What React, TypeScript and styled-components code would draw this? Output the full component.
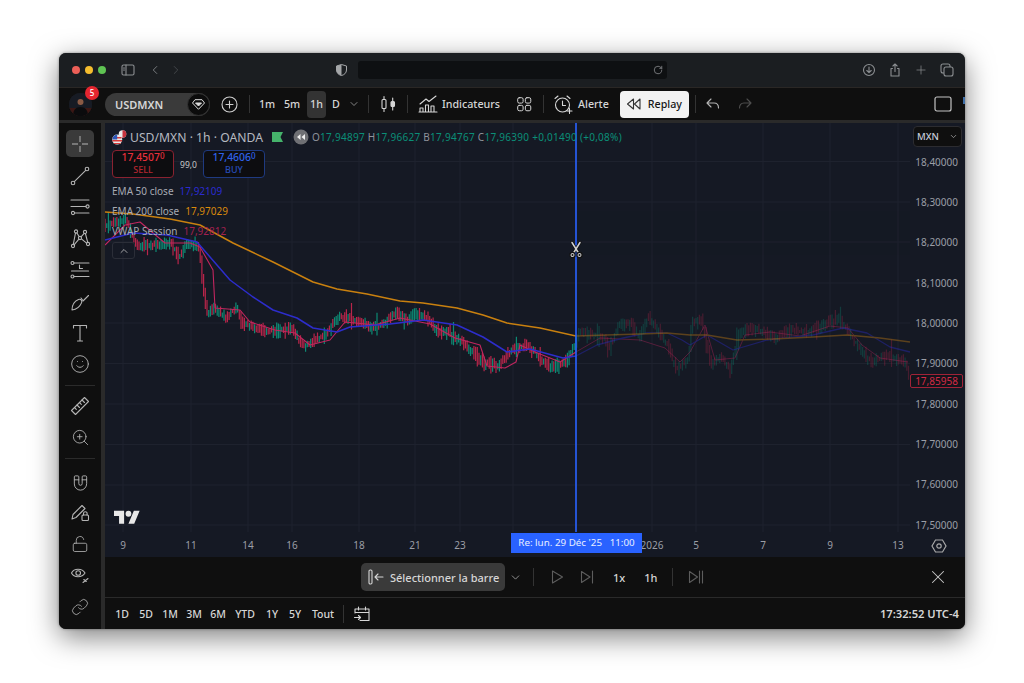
import React from "react";
import styled, { createGlobalStyle } from "styled-components";
import { ChevronDown, ChevronLeft, ChevronRight, ChevronUp, Link, LockOpen, Magnet, Plus, RotateCw, Smile, X, ZoomIn } from "lucide-react";

const COLORS = {
  title: "#1b1e21",
  bar: "#0f0f0f",
  gap: "#2a2a2a",
  chart: "#151924",
  grid: "#1e222e",
  text: "#d6d6d6",
  dim: "#9a9ca3",
  muted: "#5d5d5d",
  teal: "#0b8f78",
  red: "#c9233f",
  blue: "#2962ff",
};

const FONT = `"Noto Sans", "Liberation Sans", sans-serif`;

const GlobalStyle = createGlobalStyle`
  html, body { margin: 0; padding: 0; background: #fff; }
  body { font-family: ${FONT}; }
`;

const Page = styled.div`
  width: 1024px;
  height: 683px;
  padding: 53px 59px 54px;
  box-sizing: border-box;
  overflow: hidden;
`;

const Window = styled.div`
  width: 906px;
  height: 576px;
  border-radius: 7px;
  overflow: hidden;
  display: flex;
  flex-direction: column;
  background: ${COLORS.gap};
  box-shadow: 0 8px 28px rgba(0, 0, 0, 0.5), 0 0 3px rgba(0, 0, 0, 0.4);
`;

/* title bar */
const TitleBar = styled.div`
  height: 34px;
  flex: none;
  display: flex;
  align-items: center;
  padding-left: 13px;
  background: ${COLORS.title};
  border-bottom: 1px solid #2a2725;
  color: #8c8f92;
`;

const Light = styled.span<{ $c: string }>`
  width: 8px;
  height: 8px;
  margin-right: 5px;
  border-radius: 50%;
  background: ${({ $c }) => $c};
`;

const AddressBar = styled.div`
  width: 309px;
  height: 18px;
  margin-left: 11px;
  padding-right: 4px;
  box-sizing: border-box;
  border-radius: 3px;
  background: #0e1012;
  display: flex;
  align-items: center;
  justify-content: flex-end;
`;

const TitleIcons = styled.div`
  margin-left: auto;
  margin-right: 11px;
  display: flex;
  align-items: center;
  gap: 12px;
`;

const Nudge = styled.span<{ $l: number }>`
  display: flex;
  flex: none;
  margin-left: ${({ $l }) => $l}px;
`;

/* top toolbar */
const Toolbar = styled.div`
  height: 32px;
  flex: none;
  display: flex;
  align-items: center;
  padding-left: 10px;
  background: ${COLORS.bar};
  color: ${COLORS.text};
  font-size: 10.7px;
  font-weight: 500;
`;

const Avatar = styled.div`
  position: relative;
  width: 23px;
  height: 23px;
  flex: none;
  border-radius: 50%;
  background: #1d1a1c;
`;

const Badge = styled.span`
  position: absolute;
  top: -7px;
  right: -7px;
  width: 14px;
  height: 14px;
  border-radius: 50%;
  background: #e5252f;
  color: #fff;
  font-size: 8px;
  line-height: 14px;
  text-align: center;
`;

const SymbolPill = styled.div`
  width: 105px;
  height: 23px;
  margin-left: 13px;
  padding-left: 10px;
  box-sizing: border-box;
  flex: none;
  display: flex;
  align-items: center;
  justify-content: space-between;
  border-radius: 12px;
  background: #3a3a3a;
  font-weight: 600;
  font-size: 11px;
`;

const DiamondWrap = styled.span`
  width: 23px;
  height: 23px;
  border-radius: 50%;
  background: #0c0c0c;
  border: 1px solid #333;
  box-sizing: border-box;
  display: flex;
  align-items: center;
  justify-content: center;
`;

const Divider = styled.span<{ $l: number; $h?: number }>`
  width: 1px;
  height: ${({ $h }) => $h ?? 18}px;
  flex: none;
  margin-left: ${({ $l }) => $l}px;
  background: #333;
`;

const Interval = styled.span<{ $on?: boolean; $w: number; $l?: number }>`
  width: ${({ $w }) => $w}px;
  height: 27px;
  flex: none;
  margin-left: ${({ $l }) => $l ?? 0}px;
  border-radius: 4px;
  line-height: 27px;
  text-align: center;
  background: ${({ $on }) => ($on ? "#333" : "transparent")};
`;

const Label = styled.span<{ $l: number }>`
  margin-left: ${({ $l }) => $l}px;
  flex: none;
`;

const ReplayButton = styled.div`
  width: 69px;
  height: 27px;
  margin-left: 11px;
  padding-left: 6px;
  box-sizing: border-box;
  flex: none;
  display: flex;
  align-items: center;
  gap: 6px;
  border-radius: 4px;
  background: #f2f2f2;
  color: #161616;
`;

const Sliver = styled.span`
  width: 2px;
  height: 7px;
  margin: 0 0 8px auto;
  flex: none;
  background: #3f6fa8;
`;

/* body */
const Body = styled.div`
  flex: 1;
  min-height: 0;
  margin-top: 3px;
  display: flex;
  gap: 4px;
`;

const Sidebar = styled.div`
  width: 42px;
  flex: none;
  padding-top: 7px;
  box-sizing: border-box;
  display: flex;
  flex-direction: column;
  align-items: center;
  background: ${COLORS.bar};
  color: #b4b4b4;
`;

const Tool = styled.div<{ $on?: boolean }>`
  width: 28px;
  height: ${({ $on }) => ($on ? 27 : 31.4)}px;
  flex: none;
  border-radius: 5px;
  display: flex;
  align-items: center;
  justify-content: center;
  background: ${({ $on }) => ($on ? "#3a3a3a" : "transparent")};
`;

const Gap = styled.span<{ $h: number }>`
  height: ${({ $h }) => $h}px;
  flex: none;
`;

const SideDivider = styled.span`
  width: 30px;
  height: 1px;
  flex: none;
  background: #2b2b2b;
`;

const Main = styled.div`
  flex: 1;
  min-width: 0;
  display: flex;
  flex-direction: column;
`;

/* chart */
const ChartPane = styled.div`
  height: 434px;
  flex: none;
  display: grid;
  grid-template-columns: 805px 55px;
  grid-template-rows: 409px 25px;
  background: ${COLORS.chart};
`;

const Plot = styled.div`
  position: relative;
  grid-column: 1;
  grid-row: 1;
`;

const ChartSvg = styled.svg`
  display: block;
`;

const Legend = styled.div`
  position: absolute;
  left: 7px;
  top: 5px;
  color: #a7aab3;
`;

const SymbolRow = styled.div`
  display: flex;
  align-items: center;
  height: 18px;
  font-size: 12.2px;
  color: #b6b9c0;
`;

const Ohlc = styled.span`
  margin-left: 3px;
  font-size: 10px;
  letter-spacing: 0.27px;
  color: #8f929b;
`;

const Val = styled.span<{ $c: string }>`
  color: ${({ $c }) => $c};
`;

const TradeRow = styled.div`
  display: flex;
  align-items: center;
  margin-top: 4px;
`;

const TradeBox = styled.div<{ $c: string; $t: string }>`
  width: 62px;
  height: 28px;
  box-sizing: border-box;
  border: 1px solid ${({ $c }) => $c};
  border-radius: 4px;
  background: #0d0d10;
  color: ${({ $t }) => $t};
  text-align: center;
  font-size: 10.4px;
  line-height: 13px;
  font-weight: 500;
`;

const TradeTitle = styled.div`
  font-size: 9px;
  line-height: 11px;
  opacity: 0.75;
`;

const Sup = styled.sup`
  font-size: 8px;
  line-height: 0;
  vertical-align: 2px;
`;

const Spread = styled.span`
  width: 29px;
  text-align: center;
  font-size: 8.5px;
  color: #c8c8c8;
`;

const Study = styled.div`
  height: 20px;
  display: flex;
  align-items: center;
  gap: 6px;
  font-size: 10px;
  &:first-of-type { margin-top: 3px; }
`;

const Studies = styled.div`
  margin-top: 3px;
`;

const Collapse = styled.div`
  width: 23px;
  height: 17px;
  margin-top: 1px;
  box-sizing: border-box;
  border: 1px solid #2b2e38;
  border-radius: 3px;
  display: flex;
  align-items: center;
  justify-content: center;
  color: #c4c4c4;
`;

const TvMark = styled.svg`
  position: absolute;
  left: 9px;
  top: 387px;
`;

const Scissors = styled.svg`
  position: absolute;
  left: 463px;
  top: 118px;
`;

const PriceAxis = styled.div`
  grid-column: 2;
  grid-row: 1 / 3;
  position: relative;
  display: flex;
  flex-direction: column;
  padding-top: 18.4px;
  box-sizing: border-box;
`;

const Price = styled.div`
  height: 40.35px;
  flex: none;
  display: flex;
  align-items: center;
  justify-content: flex-end;
  padding-right: 7px;
  font-size: 10px;
  color: #9b9ea6;
`;

const CurrencySelect = styled.div`
  position: absolute;
  left: 3px;
  top: 3px;
  width: 49px;
  height: 21px;
  padding: 0 3px;
  box-sizing: border-box;
  border: 1px solid #2c2c30;
  border-radius: 4px;
  background: #0f0f0f;
  display: flex;
  align-items: center;
  justify-content: space-between;
  font-size: 9.5px;
  font-weight: 500;
  color: #c6cbd8;
`;

const LastPrice = styled.div`
  position: absolute;
  left: 0;
  top: 251px;
  width: 53px;
  height: 14px;
  box-sizing: border-box;
  border: 1px solid #a02338;
  border-radius: 2px;
  background: #14141c;
  text-align: center;
  font-size: 10px;
  line-height: 12px;
  color: #d42a45;
`;

const SettingsIcon = styled.svg`
  position: absolute;
  left: 21px;
  top: 415px;
`;

const TimeAxis = styled.div`
  position: relative;
  grid-column: 1;
  grid-row: 2;
  display: flex;
  align-items: flex-start;
  padding-top: 6px;
  box-sizing: border-box;
  font-size: 10px;
  color: #9b9ea6;
`;

const Tick = styled.span<{ $gap: number }>`
  width: 0;
  flex: none;
  display: flex;
  justify-content: center;
  margin-left: ${({ $gap }) => $gap}px;
  line-height: 14px;
`;

const CursorTime = styled.div`
  position: absolute;
  left: 406px;
  top: 1px;
  width: 131px;
  height: 20px;
  background: ${COLORS.blue};
  color: #e8eeff;
  font-size: 9.8px;
  line-height: 20px;
  text-align: center;
  white-space: pre;
`;

/* replay bar */
const ReplayBar = styled.div`
  height: 40px;
  flex: none;
  display: flex;
  align-items: center;
  padding-left: 256px;
  background: ${COLORS.bar};
  color: ${COLORS.text};
  font-size: 11px;
  font-weight: 500;
`;

const SelectBar = styled.div`
  width: 144px;
  height: 28px;
  flex: none;
  padding-left: 6px;
  box-sizing: border-box;
  display: flex;
  align-items: center;
  gap: 5px;
  border-radius: 5px;
  background: #3a3a3a;
`;

const CloseSlot = styled.span`
  margin-left: auto;
  margin-right: 16px;
  display: flex;
`;

/* range bar */
const RangeBar = styled.div`
  height: 31px;
  flex: none;
  margin-top: 1px;
  display: flex;
  align-items: center;
  background: ${COLORS.bar};
  color: ${COLORS.text};
  font-size: 10.5px;
  font-weight: 500;
`;

const RangeItem = styled.span<{ $w: number }>`
  width: ${({ $w }) => $w}px;
  flex: none;
  text-align: center;
`;

const Clock = styled.span`
  margin-left: auto;
  margin-right: 6px;
  font-size: 11.2px;
  font-weight: 600;
`;

/* icons */
type IconProps = { size?: number; c?: string; children: React.ReactNode; box?: number };

const Icon = ({ size = 20, c = "currentColor", children, box = 20 }: IconProps) => (
  <svg width={size} height={size} viewBox={`0 0 ${box} ${box}`} fill="none" stroke={c} strokeWidth={1.1} strokeLinecap="round" strokeLinejoin="round">
    {children}
  </svg>
);

const Crosshair = () => (
  <Icon>
    <path d="M10 2v6M10 12v6M2 10h6M12 10h6" strokeLinecap="butt" strokeWidth="1.4" stroke="#8d8d8d" />
  </Icon>
);

const TrendLine = () => (
  <Icon>
    <circle cx="3" cy="17" r="1.8" />
    <circle cx="17" cy="3" r="1.8" />
    <path d="M4.3 15.7 15.7 4.3" />
  </Icon>
);

const FibLines = () => (
  <Icon>
    <path d="M1 3h18M1 9.5h15M5 16h14" />
    <circle cx="17.5" cy="9.5" r="1.6" />
    <circle cx="3" cy="16" r="1.6" />
  </Icon>
);

const Nodes = () => (
  <Icon>
    <circle cx="6" cy="2.5" r="1.6" />
    <circle cx="15" cy="3" r="1.6" />
    <circle cx="10" cy="9" r="1.6" />
    <circle cx="3" cy="17" r="1.6" />
    <circle cx="18" cy="15" r="1.6" />
    <path d="M7 4 9 7.600M14.200 4.400 11 7.800M11.400 9.800 16.600 14.200M8.900 10.200 4.100 15.800M5.500 4 3.300 15.400M15.400 4.500 17.700 13.400" />
  </Icon>
);

const FibL = () => (
  <Icon>
    <circle cx="2.5" cy="3" r="1.5" />
    <circle cx="2.5" cy="16.5" r="1.5" />
    <path d="M4 3h15M4 16.5h15M1.5 11h17" />
    <path d="M9.500 5v3.500h3" />
  </Icon>
);

const Brush = () => (
  <Icon>
    <path d="M2 18c0-5 3-9 6.500-10.500 2.500-.8 4 1.500 3 3.400C10 14.500 6 17.500 2 18Z" />
    <path d="M13 9 18.500 3.500M11 6l1.500 2" />
  </Icon>
);

const TextTool = () => (
  <Icon>
    <path d="M3.500 5V2.500h13V5M10 2.500V18M7.500 18h5" />
  </Icon>
);

const RulerTool = () => (
  <Icon>
    <path d="M1.500 14.500 14.500 1.500l4 4-13 13Z" />
    <path d="m4.500 11.500 1.800 1.800M7 9l2.500 2.500M9.500 6.500l1.800 1.800M12 4l2.500 2.500" />
  </Icon>
);

const PencilLock = () => (
  <Icon>
    <path d="M2 17l1-4.500L12 3.500l3 3-9 9Z" />
    <rect x="12" y="13" width="6.500" height="5.500" rx="1" />
    <path d="M13.500 13v-1.500a1.800 1.800 0 0 1 3.600 0V13" />
  </Icon>
);

const EyeTool = () => (
  <Icon>
    <path d="M1.500 8C4 3 12 3 15 8c-3 5-11 5-13.500 0Z" />
    <circle cx="8.200" cy="8" r="2.300" />
    <path d="M13 17.500l5-4M13.800 14.500l2.500 2" />
  </Icon>
);

const CandleIcon = () => (
  <Icon>
    <rect x="4" y="5.500" width="4" height="9" rx="1" />
    <path d="M6 2.500v3M6 14.500v3" />
    <rect x="13" y="7.500" width="3.500" height="5" rx="1" fill="currentColor" />
    <path d="M14.700 4v3.500M14.700 12.500V16" />
  </Icon>
);

const IndicatorIcon = () => (
  <Icon size={20}>
    <path d="M2 10 8 5l3 2.500L18 2" />
    <path d="M2 18v-4h3v4M7.500 18v-7h3v7M13 18v-6h3v6M1 18h18" />
  </Icon>
);

const GridIcon = () => (
  <Icon size={18}>
    <rect x="3" y="3" width="6" height="6" rx="1.700" />
    <rect x="11.500" y="3" width="6" height="6" rx="1.700" />
    <rect x="3" y="11.500" width="6" height="6" rx="1.700" />
    <rect x="11.500" y="11.500" width="6" height="6" rx="1.700" />
  </Icon>
);

const AlarmIcon = () => (
  <Icon size={20}>
    <circle cx="9.500" cy="11" r="7" />
    <path d="M9.500 7v4.500h3M2 4.500 5 2M17 4.500 14 2" />
    <path d="M16.500 14.500v5M14 17h5" stroke="#ddd" />
  </Icon>
);

const Rewind = ({ c = "currentColor", size = 16 }: { c?: string; size?: number }) => (
  <Icon size={size} c={c} box={16}>
    <path d="M7.500 3v10L1.500 8ZM14 3v10L8.500 8Z" />
  </Icon>
);

const SelectBarIcon = () => (
  <Icon size={18} box={18}>
    <rect x="2" y="2" width="3" height="14" rx="1.200" />
    <path d="M16 9H8M11 6 8 9l3 3" />
  </Icon>
);

const PlayIcon = () => (
  <Icon size={18} c={COLORS.muted} box={18}>
    <path d="M4.500 3 14.500 9 4.500 15Z" />
  </Icon>
);

const StepIcon = () => (
  <Icon size={18} c={COLORS.muted} box={18}>
    <path d="M3.500 3.500 12 9l-8.500 5.500ZM14.500 3v12" />
  </Icon>
);

const JumpIcon = () => (
  <Icon size={18} c={COLORS.muted} box={18}>
    <path d="M2.500 3.500 10.500 9l-8 5.500ZM12.500 3v12M15.500 3v12" />
  </Icon>
);

const CalendarJump = () => (
  <Icon size={18} box={18}>
    <path d="M2 8V4h14v11.500H7M2 7.500h14M5.500 2v3M12.500 2v3M1.500 12.500h6M5.500 10.500l2 2-2 2" />
  </Icon>
);

const UsFlag = () => (
  <svg width="15" height="15" viewBox="0 0 15 15">
    <circle cx="10.500" cy="4" r="3.800" fill="#e9e9e9" />
    <path d="M10.500.2a3.800 3.800 0 0 1 0 7.600Z" fill="#c8343f" />
    <circle cx="5.200" cy="9.600" r="5" fill="#e9e9e9" />
    <path d="M1 7h8.500v1.400H.6ZM.3 10h9.800v1.400H.6ZM2 13h6.500v1H2Z" fill="#d63a3a" />
    <path d="M.4 9.600A5 5 0 0 1 5.200 4.600v5Z" fill="#2c56b8" />
  </svg>
);

const GreenFlag = () => (
  <svg width="12" height="10" viewBox="0 0 12 10">
    <path d="M0 0h11L8.500 5 11 10H0Z" fill="#45b36b" />
  </svg>
);

const RewindBadge = () => (
  <svg width="16" height="16" viewBox="0 0 16 16">
    <circle cx="8" cy="8" r="7.500" fill="#6f7074" />
    <path d="M7.500 5v6L4 8ZM12 5v6L8.500 8Z" fill="#eee" />
  </svg>
);

const AvatarArt = () => (
  <svg width="23" height="23" viewBox="0 0 23 23">
    <defs>
      <clipPath id="av">
        <circle cx="11.500" cy="11.500" r="11.500" />
      </clipPath>
    </defs>
    <g clipPath="url(#av)">
      <rect width="23" height="23" fill="#171b24" />
      <rect y="15" width="23" height="8" fill="#3c1714" />
      <circle cx="11.500" cy="9" r="3" fill="#8a5a44" />
      <path d="M4 23c0-6 3-9 7.500-9s7.500 3 7.500 9Z" fill="#0b0b0d" />
    </g>
  </svg>
);

/* chart data, all in page coordinates so they can be read off the picture */
type Pt = [number, number];

const EMA200: Pt[] = [[105,212],[133,214],[170,219],[200,225],[233,243],[273,262],[313,282],[337,289],[367,294],[400,301],[423,303],[457,308],[483,315],[507,323],[540,328],[576,336],[607,335],[640,334],[667,333],[690,335],[707,335],[737,340],[773,339],[813,337],[847,335],[880,338],[910,342]];
const EMA50: Pt[] = [[105,240],[133,233],[167,235],[197,242],[210,257],[230,280],[253,297],[273,310],[297,318],[313,328],[337,332],[350,327],[390,324],[423,320],[457,325],[483,337],[507,352],[530,349],[563,358],[576,356],[597,345],[623,338],[647,333],[667,333],[682,340],[690,345],[707,335],[733,350],[767,340],[813,335],[843,328],[867,333],[890,347],[910,352]];
const VWAP: Pt[] = [[105,245],[125,225],[140,222],[165,243],[190,243],[200,247],[213,270],[215,308],[240,310],[250,322],[275,330],[295,333],[310,345],[330,340],[345,322],[375,325],[400,318],[430,324],[455,338],[480,345],[487,366],[505,368],[516,362],[520,345],[535,352],[560,362],[576,352],[600,338],[640,340],[665,348],[680,362],[690,352],[705,325],[715,360],[735,358],[745,335],[770,332],[800,336],[830,326],[848,328],[862,345],[880,358],[908,362]];
const PRICE: Pt[] = [[105,226],[127,219],[138,247],[173,243],[180,258],[188,243],[200,245],[205,290],[208,313],[215,308],[228,318],[238,307],[243,323],[267,332],[293,328],[305,347],[327,335],[340,317],[347,317],[373,327],[383,325],[397,313],[410,322],[415,312],[430,320],[440,333],[450,332],[467,345],[483,362],[500,367],[512,350],[528,345],[537,353],[550,368],[567,362],[575,347],[580,333],[590,333],[607,340],[610,350],[620,325],[633,323],[640,337],[650,317],[657,327],[668,343],[678,370],[690,358],[693,323],[703,320],[712,363],[723,357],[732,370],[740,333],[755,328],[777,338],[793,330],[807,333],[817,328],[840,318],[847,328],[860,347],[873,363],[887,355],[907,362],[910,375]];

const CURSOR_X = 576;
const HLINES = [161.5, 202, 242, 283, 323, 363.5, 404, 444.5, 485, 525];
const VLINES = [123, 191, 248, 292, 359, 415, 460, 513, 576, 652, 696, 763, 830, 898];

const at = (pts: Pt[], x: number) => {
  for (let i = 1; i < pts.length; i++) {
    if (x <= pts[i][0]) {
      const [x0, y0] = pts[i - 1];
      const [x1, y1] = pts[i];
      return y0 + ((y1 - y0) * (x - x0)) / (x1 - x0);
    }
  }
  return pts[pts.length - 1][1];
};

const line = (pts: Pt[]) => pts.map(([x, y], i) => `${i ? "L" : "M"}${x} ${y}`).join("");

const buildCandles = (from: number, to: number, seed: number) => {
  let s = seed;
  const rnd = () => {
    s = (s * 16807) % 2147483647;
    return s / 2147483647;
  };
  let up = "";
  let down = "";
  for (let x = from; x < to; x += 1.7) {
    const mid = at(PRICE, x);
    const next = at(PRICE, x + 1.7);
    const noise = (rnd() - 0.5) * 8;
    const open = mid + noise;
    const close = next - noise * 0.6;
    const spike = rnd() > 0.88 ? rnd() * 9 : 0;
    const top = Math.min(open, close) - rnd() * 4 - 1 - (rnd() > 0.5 ? spike : 0);
    const low = Math.max(open, close) + rnd() * 4 + 1 + spike * 0.7;
    const bar = `M${x.toFixed(1)} ${top.toFixed(1)}V${low.toFixed(1)}M${x.toFixed(1)} ${open.toFixed(1)}V${close.toFixed(1)}`;
    if (close < open) up += bar;
    else down += bar;
  }
  return { up, down };
};

const PAST = buildCandles(105, CURSOR_X, 4711);
const FUTURE = buildCandles(CURSOR_X + 1, 910, 90210);

const ChartDrawing = () => (
  <ChartSvg width="805" height="409" viewBox="105 123 805 409">
    <g stroke={COLORS.grid} strokeWidth="1">
      {HLINES.map((y) => <path key={y} d={`M105 ${y}H910`} />)}
      {VLINES.map((x) => <path key={x} d={`M${x} 123V532`} />)}
    </g>
    <g fill="none" strokeWidth="1.2">
      <g>
        <path d={PAST.up} stroke="#0d8a74" />
        <path d={PAST.down} stroke="#b8254a" />
      </g>
      <g opacity="0.3">
        <path d={FUTURE.up} stroke="#0d8a74" />
        <path d={FUTURE.down} stroke="#b8254a" />
      </g>
    </g>
    <clipPath id="past"><rect x="105" y="123" width={CURSOR_X - 105} height="409" /></clipPath>
    <clipPath id="future"><rect x={CURSOR_X} y="123" width={910 - CURSOR_X} height="409" /></clipPath>
    <g fill="none" clipPath="url(#past)" strokeLinejoin="round">
      <path d={line(VWAP)} stroke="#c2265f" strokeWidth="1.1" />
      <path d={line(EMA50)} stroke="#2d2dcc" strokeWidth="1.5" />
      <path d={line(EMA200)} stroke="#c9800f" strokeWidth="1.5" />
    </g>
    <g fill="none" clipPath="url(#future)" strokeLinejoin="round" opacity="0.4">
      <path d={line(VWAP)} stroke="#b4245c" strokeWidth="1" />
      <path d={line(EMA50)} stroke="#2b2bc4" strokeWidth="1.3" />
      <path d={line(EMA200)} stroke="#c67d12" strokeWidth="1.3" />
    </g>
    <path d={`M${CURSOR_X} 123V532`} stroke={COLORS.blue} strokeWidth="1.6" />
  </ChartSvg>
);

const PRICES = ["18,40000", "18,30000", "18,20000", "18,10000", "18,00000", "17,90000", "17,80000", "17,70000", "17,60000", "17,50000"];
const TICKS: [string, number][] = [["9", 18], ["11", 68], ["14", 57], ["16", 44], ["18", 67], ["21", 56], ["23", 45], ["2026", 192], ["5", 44], ["7", 67], ["9", 67], ["13", 68]];
const RANGES: [string, number][] = [["1D", 24], ["5D", 24], ["1M", 24], ["3M", 24], ["6M", 24], ["YTD", 30], ["1Y", 24], ["5Y", 22], ["Tout", 34]];

export default function App() {
  return (
    <Page>
      <GlobalStyle />
      <Window>
        <TitleBar>
          <Light $c="#ec5f57" />
          <Light $c="#f5bd2e" />
          <Light $c="#5fc453" />
          <Nudge $l={10}>
            <Icon size={14} box={14}>
              <rect x="1" y="2" width="12" height="10" rx="1.5" />
              <path d="M5 2v10M2.500 5h1M2.500 7h1" />
            </Icon>
          </Nudge>
          <Nudge $l={13}><ChevronLeft size={14} strokeWidth={1.4} /></Nudge>
          <Nudge $l={7}><ChevronRight size={14} strokeWidth={1.4} color="#4b4e52" /></Nudge>
          <Nudge $l={153}>
            <svg width="11" height="12" viewBox="0 0 11 12">
              <path d="M5.500.5 10.500 2v4c0 3-2.500 5-5 5.500C3 11 .5 9 .5 6V2Z" fill="none" stroke="#a4a6a8" />
              <path d="M5.500.5v11C3 11 .5 9 .5 6V2Z" fill="#a4a6a8" />
            </svg>
          </Nudge>
          <AddressBar><RotateCw size={10} strokeWidth={1.6} color="#a0a2a4" /></AddressBar>
          <TitleIcons>
            <Icon size={14} box={14}>
              <circle cx="7" cy="7" r="5.500" />
              <path d="M7 4v5.500M4.800 7.500 7 9.700l2.200-2.200" />
            </Icon>
            <Icon size={14} box={14}>
              <path d="M4.500 5.500H3v7.500h8V5.500H9.500M7 1v7.500M4.900 3 7 1l2.100 2" />
            </Icon>
            <Plus size={14} strokeWidth={1.2} />
            <Icon size={14} box={14}>
              <rect x="1" y="1" width="9" height="9" rx="2" />
              <rect x="4" y="4" width="9" height="9" rx="2" fill={COLORS.title} />
            </Icon>
          </TitleIcons>
        </TitleBar>

        <Toolbar>
          <Avatar>
            <AvatarArt />
            <Badge>5</Badge>
          </Avatar>
          <SymbolPill>
            USDMXN
            <DiamondWrap>
              <svg width="13" height="11" viewBox="0 0 13 11" fill="none" stroke="#ddd" strokeWidth="1">
                <path d="M3 .7h7l2.500 3.300-6 6.300-6-6.300Z" />
                <path d="M3.500 4h6l-3 3Z" fill="#ddd" />
              </svg>
            </DiamondWrap>
          </SymbolPill>
          <Nudge $l={11}>
            <Icon size={17} box={17} c="#cfcfcf">
              <circle cx="8.500" cy="8.500" r="7.500" />
              <path d="M8.500 5v7M5 8.500h7" />
            </Icon>
          </Nudge>
          <Divider $l={11} />
          <Interval $w={22} $l={6}>1m</Interval>
          <Interval $w={24} $l={2}>5m</Interval>
          <Interval $w={19} $l={3} $on>1h</Interval>
          <Interval $w={20}>D</Interval>
          <Nudge $l={2}><ChevronDown size={12} strokeWidth={1.5} color="#aaa" /></Nudge>
          <Divider $l={8} />
          <Nudge $l={9}><CandleIcon /></Nudge>
          <Divider $l={9} />
          <Nudge $l={10}><IndicatorIcon /></Nudge>
          <Label $l={4}>Indicateurs</Label>
          <Nudge $l={15}><GridIcon /></Nudge>
          <Divider $l={10} />
          <Nudge $l={9}><AlarmIcon /></Nudge>
          <Label $l={5}>Alerte</Label>
          <ReplayButton>
            <Rewind c="#333" />
            Replay
          </ReplayButton>
          <Divider $l={6} />
          <Nudge $l={9}>
            <Icon size={16} box={16} c="#b4b4b4">
              <path d="M6 3 2 7l4 4M2 7h7c3 0 4.500 2 4.500 5" />
            </Icon>
          </Nudge>
          <Nudge $l={16}>
            <Icon size={16} box={16} c="#4d4d4d">
              <path d="M10 3l4 4-4 4M14 7H7c-3 0-4.500 2-4.500 5" />
            </Icon>
          </Nudge>
          <Nudge $l={181}>
            <svg width="18" height="16" viewBox="0 0 18 16" fill="none" stroke="#c4c4c4" strokeWidth="1.2">
              <rect x="1" y="1" width="16" height="14" rx="2" />
            </svg>
          </Nudge>
          <Sliver />
        </Toolbar>

        <Body>
          <Sidebar>
            <Tool $on><Crosshair /></Tool>
            <Gap $h={3.3} />
            <Tool><TrendLine /></Tool>
            <Tool><FibLines /></Tool>
            <Tool><Nodes /></Tool>
            <Tool><FibL /></Tool>
            <Tool><Brush /></Tool>
            <Tool><TextTool /></Tool>
            <Tool><Smile size={20} strokeWidth={1.1} /></Tool>
            <Gap $h={5} />
            <SideDivider />
            <Gap $h={4.3} />
            <Tool><RulerTool /></Tool>
            <Tool><ZoomIn size={19} strokeWidth={1.1} /></Tool>
            <Gap $h={5} />
            <SideDivider />
            <Gap $h={6.3} />
            <Tool><Magnet size={19} strokeWidth={1.1} style={{ transform: "rotate(135deg)" }} /></Tool>
            <Tool><PencilLock /></Tool>
            <Tool><LockOpen size={18} strokeWidth={1.1} /></Tool>
            <Tool><EyeTool /></Tool>
            <Tool><Link size={18} strokeWidth={1.1} /></Tool>
          </Sidebar>

          <Main>
            <ChartPane>
              <Plot>
                <ChartDrawing />
                <Legend>
                  <SymbolRow>
                    <UsFlag />
                    <Label $l={3}>USD/MXN · 1h · OANDA</Label>
                    <Nudge $l={9}><GreenFlag /></Nudge>
                    <Nudge $l={9}><RewindBadge /></Nudge>
                    <Ohlc>
                      O<Val $c={COLORS.teal}>17,94897</Val> H<Val $c={COLORS.teal}>17,96627</Val> B<Val $c={COLORS.teal}>17,94767</Val> C<Val $c={COLORS.teal}>17,96390</Val>{" "}
                      <Val $c={COLORS.teal}>+0,01490 (+0,08%)</Val>
                    </Ohlc>
                  </SymbolRow>
                  <TradeRow>
                    <TradeBox $c="#8a2230" $t="#e8303c">
                      17,4507<Sup>0</Sup>
                      <TradeTitle>SELL</TradeTitle>
                    </TradeBox>
                    <Spread>99,0</Spread>
                    <TradeBox $c="#1f3a80" $t="#2f62ea">
                      17,4606<Sup>0</Sup>
                      <TradeTitle>BUY</TradeTitle>
                    </TradeBox>
                  </TradeRow>
                  <Studies>
                    <Study>EMA 50 close <Val $c="#2b2bd0">17,92109</Val></Study>
                    <Study>EMA 200 close <Val $c="#d98a0c">17,97029</Val></Study>
                    <Study>VWAP Session <Val $c="#a3204f">17,92812</Val></Study>
                  </Studies>
                  <Collapse><ChevronUp size={12} strokeWidth={1.6} /></Collapse>
                </Legend>
                <TvMark width="26" height="14" viewBox="0 0 36 19" fill="#e8e8e8">
                  <path d="M14 19H7V8H0V1h14v18ZM28 19h-8l7.500-18h8L28 19Z" />
                  <circle cx="20" cy="5" r="4" />
                </TvMark>
                <Scissors width="16" height="18" viewBox="0 0 16 18" fill="none" stroke="#111" strokeLinecap="round">
                  <path d="M4 1.500 10.500 12M12 1.500 5.500 12" strokeWidth="3" />
                  <path d="M4 1.500 10.500 12M12 1.500 5.500 12" stroke="#cfcfcf" strokeWidth="1.5" />
                  <circle cx="4.500" cy="14" r="2.600" fill="#cfcfcf" strokeWidth="1.2" />
                  <circle cx="11.500" cy="14" r="2.600" fill="#cfcfcf" strokeWidth="1.2" />
                  <circle cx="4.500" cy="14" r="1" fill="#111" stroke="none" />
                  <circle cx="11.500" cy="14" r="1" fill="#111" stroke="none" />
                </Scissors>
              </Plot>
              <TimeAxis>
                {TICKS.map(([t, g], i) => <Tick key={i} $gap={g}>{t}</Tick>)}
                <CursorTime>{"Re: lun. 29 Déc '25   11:00"}</CursorTime>
              </TimeAxis>
              <PriceAxis>
                <CurrencySelect>MXN<ChevronDown size={9} strokeWidth={2} color="#aaa" /></CurrencySelect>
                {PRICES.map((p) => <Price key={p}>{p}</Price>)}
                <LastPrice>17,85958</LastPrice>
                <SettingsIcon width="16" height="16" viewBox="0 0 16 16" fill="none" stroke="#a8a8a8" strokeWidth="1.2">
                  <path d="M4.500 2h7L15 8l-3.500 6h-7L1 8Z" />
                  <circle cx="8" cy="8" r="2.200" />
                </SettingsIcon>
              </PriceAxis>
            </ChartPane>

            <ReplayBar>
              <SelectBar>
                <SelectBarIcon />
                Sélectionner la barre
              </SelectBar>
              <Nudge $l={4}><ChevronDown size={13} strokeWidth={1.5} color="#aaa" /></Nudge>
              <Divider $l={11} $h={18} />
              <Nudge $l={14}><PlayIcon /></Nudge>
              <Nudge $l={12}><StepIcon /></Nudge>
              <Label $l={17}>1x</Label>
              <Label $l={19}>1h</Label>
              <Divider $l={15} $h={18} />
              <Nudge $l={14}><JumpIcon /></Nudge>
              <CloseSlot><X size={22} strokeWidth={1.1} color="#c8c8c8" /></CloseSlot>
            </ReplayBar>

            <RangeBar>
              <Nudge $l={5} />
              {RANGES.map(([r, w]) => <RangeItem key={r} $w={w}>{r}</RangeItem>)}
              <Divider $l={3} $h={18} />
              <Nudge $l={9}><CalendarJump /></Nudge>
              <Clock>17:32:52 UTC-4</Clock>
            </RangeBar>
          </Main>
        </Body>
      </Window>
    </Page>
  );
}
